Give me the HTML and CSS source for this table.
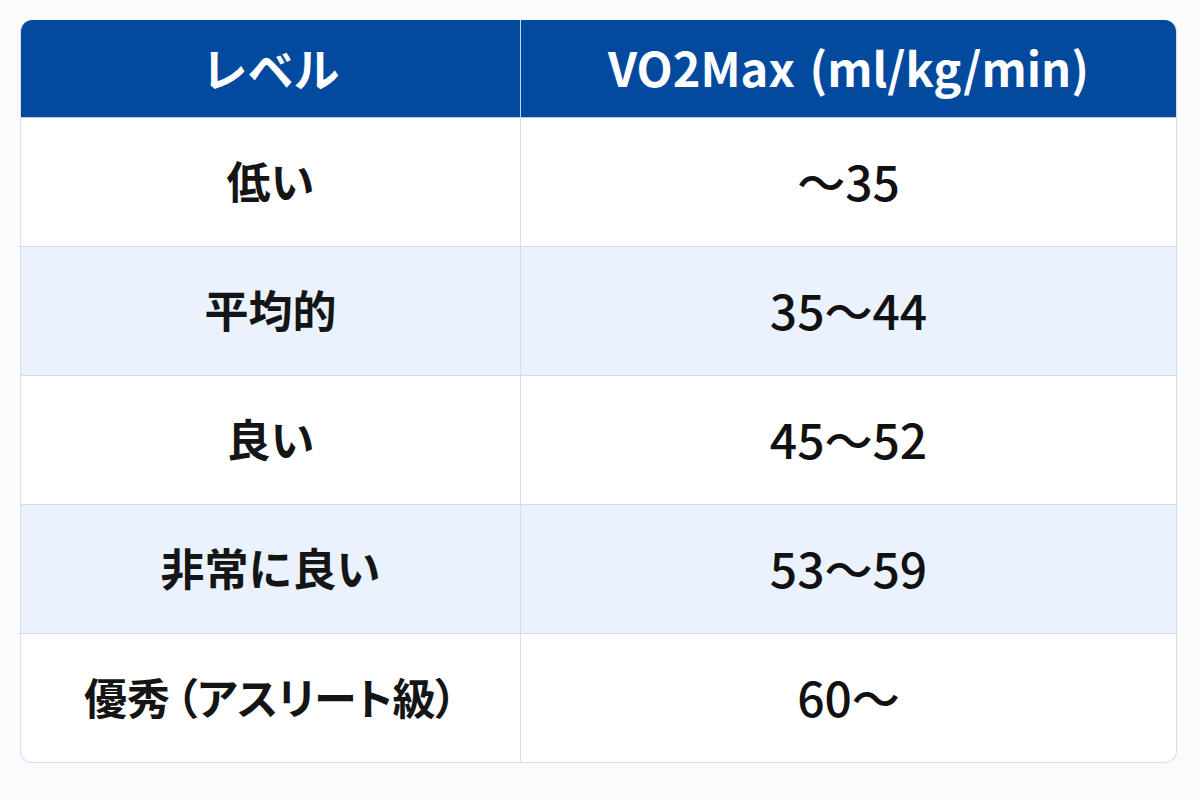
FILE: index.html
```html
<!DOCTYPE html>
<html lang="ja">
<head>
<meta charset="utf-8">
<link rel="stylesheet" href="styles.css">
</head>
<body>
<div class="card">
  <div class="row head">
    <div class="cell label">レベル</div>
    <div class="cell value">VO2Max (ml/kg/min)</div>
  </div>
  <div class="row">
    <div class="cell">低い</div>
    <div class="cell num">〜35</div>
  </div>
  <div class="row alt">
    <div class="cell">平均的</div>
    <div class="cell num">35〜44</div>
  </div>
  <div class="row">
    <div class="cell">良い</div>
    <div class="cell num">45〜52</div>
  </div>
  <div class="row alt">
    <div class="cell">非常に良い</div>
    <div class="cell num">53〜59</div>
  </div>
  <div class="row last">
    <div class="cell tight">優秀 （アスリート級）</div>
    <div class="cell num">60〜</div>
  </div>
</div>
</body>
</html>
```
FILE: styles.css
```css
html, body {
  margin: 0;
  padding: 0;
  background: #fbfbfd;
}
body {
  padding: 20px 0 0 20px;
  font-family: "Noto Sans CJK JP", "Noto Sans", sans-serif;
}
.card {
  width: 1157px;
  box-sizing: border-box;
  border: 1px solid #d3deef;
  border-top: none;
  border-radius: 12px;
  overflow: hidden;
  background: #ffffff;
}
.row {
  display: grid;
  grid-template-columns: 499px 1fr;
  height: 129px;
  border-bottom: 1px solid #cfdcef;
  box-sizing: border-box;
}
.row.last {
  border-bottom: none;
  height: 128px;
}
.row.alt {
  background: #eaf2fd;
}
.cell {
  display: flex;
  align-items: center;
  justify-content: center;
  font-size: 44px;
  font-weight: 700;
  color: #151515;
  padding-bottom: 4px;
  box-sizing: border-box;
  white-space: pre;
}
.cell.num {
  font-size: 48px;
  font-weight: 500;
  color: #111111;
}
.cell.tight {
  font-size: 43px;
  font-feature-settings: "palt";
  word-spacing: -4px;
}
.cell + .cell {
  border-left: 1px solid #d3deef;
}
.row.head {
  height: 98px;
  background: #034a9f;
  border-bottom: 1px solid #b9cbe6;
}
.row.head .cell {
  color: #ffffff;
  font-weight: 600;
}
.row.head .cell.label {
  font-size: 46px;
}
.row.head .cell.value {
  font-size: 47px;
  word-spacing: 4px;
}
.row.head .cell + .cell {
  border-left: 1px solid #c9d7ec;
}
```
